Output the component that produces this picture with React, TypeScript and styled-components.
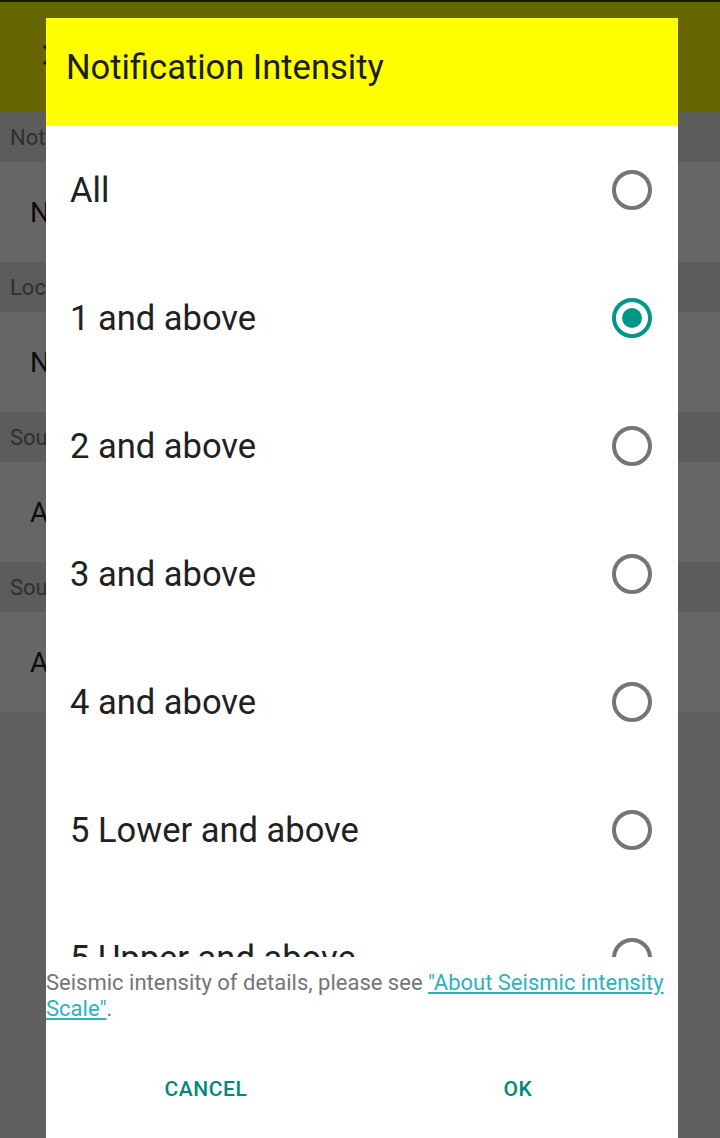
import React, { FC, useState } from 'react'
import styled, { createGlobalStyle } from 'styled-components'

const GlobalStyle = createGlobalStyle`
  html, body {
    margin: 0;
    padding: 0;
  }
  body {
    font-family: Roboto, "Noto Sans", "Liberation Sans", sans-serif;
    -webkit-font-smoothing: antialiased;
  }
`

const options = [
    'All',
    '1 and above',
    '2 and above',
    '3 and above',
    '4 and above',
    '5 Lower and above',
    '5 Upper and above',
    '6 Lower and above',
    '6 Upper and above',
    '7',
]

const settings = [
    { section: 'Notification', value: 'Notification Intensity' },
    { section: 'Location', value: 'Not set' },
    { section: 'Sound (Earthquake)', value: 'Alarm' },
    { section: 'Sound (Tsunami)', value: 'Alarm' },
]

const App: FC = () => {
    const [selected, setSelected] = useState(1)

    return (
        <Screen>
            <GlobalStyle />
            <StatusStrip />
            <AppBar>
                <svg width='34' height='34' viewBox='0 0 24 24'>
                    <path fill='#1a1a1a' d='M19 6.41L17.59 5 12 10.59 6.41 5 5 6.41 10.59 12 5 17.59 6.41 19 12 13.41 17.59 19 19 17.59 13.41 12z' />
                </svg>
            </AppBar>
            {settings.map(s => (
                <div key={s.section}>
                    <SectionHeader>{s.section}</SectionHeader>
                    <SettingRow>{s.value}</SettingRow>
                </div>
            ))}

            <Scrim />

            <Dialog>
                <DialogTitle>Notification Intensity</DialogTitle>
                <OptionList>
                    {options.map((label, i) => (
                        <OptionRow key={label} onClick={() => setSelected(i)}>
                            <span>{label}</span>
                            <Radio checked={selected === i} />
                        </OptionRow>
                    ))}
                </OptionList>
                <Note>
                    Seismic intensity of details, please see <a href='#scale'>"About Seismic intensity Scale"</a>.
                </Note>
                <ButtonRow>
                    <DialogButton>CANCEL</DialogButton>
                    <DialogButton>OK</DialogButton>
                </ButtonRow>
            </Dialog>
        </Screen>
    )
}

const Screen = styled.div`
position: relative;
height: 1138px;
overflow: hidden;
background: #f0f0f0;
`

const StatusStrip = styled.div`
height: 2px;
background: #3a3a2a;
`

const AppBar = styled.div`
height: 110px;
background: #ffff00;
display: flex;
align-items: center;
padding-left: 36px;
svg {
  margin-top: -4px;
}
`

const SectionHeader = styled.div`
height: 50px;
background: #e6e6e6;
color: #757575;
font-size: 22px;
display: flex;
align-items: center;
padding-left: 10px;
`

const SettingRow = styled.div`
height: 100px;
background: #ffffff;
color: #212121;
font-size: 28px;
display: flex;
align-items: center;
padding-left: 30px;
`

const Scrim = styled.div`
position: absolute;
inset: 0;
background: rgba(0, 0, 0, 0.6);
`

const Dialog = styled.div`
position: absolute;
top: 18px;
left: 46px;
width: 632px;
bottom: 0;
background: #ffffff;
display: flex;
flex-direction: column;
`

const DialogTitle = styled.div`
height: 108px;
flex-shrink: 0;
background: #ffff00;
color: #1c1c1c;
font-size: 34.5px;
display: flex;
align-items: center;
padding: 0 0 10px 20px;
box-sizing: border-box;
`

const OptionList = styled.div`
height: 831px;
flex-shrink: 0;
overflow: hidden;
`

const OptionRow = styled.div`
height: 128px;
display: flex;
align-items: center;
justify-content: space-between;
padding: 0 26px 0 24px;
color: #212121;
font-size: 34.5px;
cursor: pointer;
`

const Radio = styled.span<{ checked: boolean }>`
width: 40px;
height: 40px;
box-sizing: border-box;
border-radius: 50%;
border: 4px solid ${p => p.checked ? '#009688' : '#757575'};
display: flex;
align-items: center;
justify-content: center;
&::after {
  content: '';
  width: 20px;
  height: 20px;
  border-radius: 50%;
  background: #009688;
  display: ${p => p.checked ? 'block' : 'none'};
}
`

const Note = styled.div`
padding-top: 13px;
color: #757575;
font-size: 22px;
line-height: 26px;
a {
  color: #2bb3c0;
  text-decoration: underline;
}
`

const ButtonRow = styled.div`
display: grid;
grid-template-columns: 1fr 1fr;
padding-top: 18px;
`

const DialogButton = styled.button`
height: 98px;
border: none;
background: transparent;
color: #00897b;
font-family: Roboto, "Liberation Sans", sans-serif;
font-size: 21px;
font-weight: 500;
letter-spacing: 0.6px;
padding: 0;
&:first-child {
  padding-left: 4px;
}
&:last-child {
  padding-right: 4px;
}
`

export default App
